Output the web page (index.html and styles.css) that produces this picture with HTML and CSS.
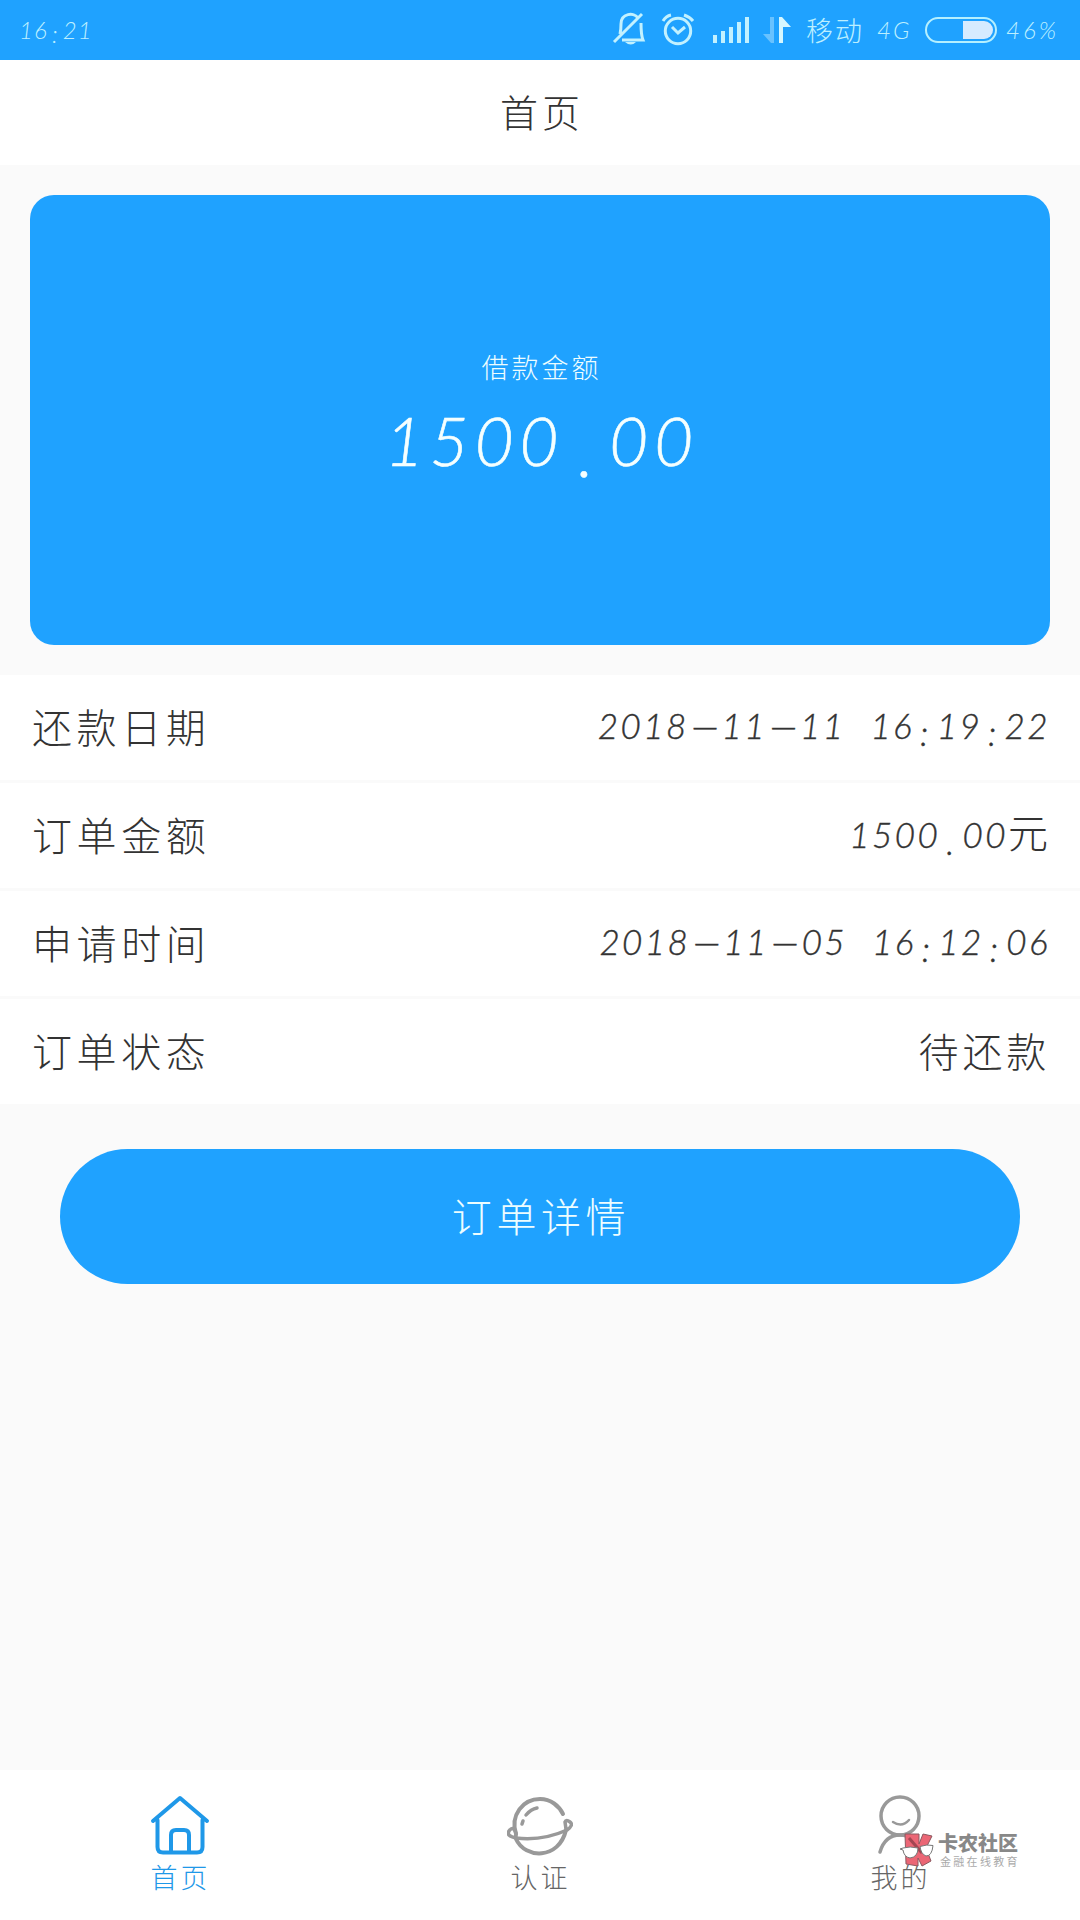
FILE: index.html
```
<!DOCTYPE html>
<html lang="zh-CN">
<head>
    <meta charset="UTF-8">
    <meta name="viewport" content="width=device-width, initial-scale=1.0">
    <title>首页</title>
    <link rel="stylesheet" href="styles.css">
</head>
<body>
    <div class="status-bar">
        <span class="clock">16<i>:</i>21</span>
        <svg class="status-icons" width="196" height="60" viewBox="0 0 196 60" fill="none" stroke="#c2f1ff" stroke-width="3">
            <!-- silent bell -->
            <path d="M10 34C11 30 11 27 11 24C11 13 24 12 28 18M31 23C31 31 31 35 33 40H12M4 42L32 14"/>
            <path d="M15 42h11q-5 5-11 0z" fill="#c2f1ff" stroke="none"/>
            <!-- alarm -->
            <circle cx="68" cy="31" r="12.7"/>
            <path d="M62 27l6 6 7-6M53 21q3-5 8-6M74 15q6 2 9 6"/>
            <!-- signal -->
            <path d="M105 35v8M113 31v12M121 27v16M129 22v21M137 17v26" stroke-width="4"/>
            <!-- data arrows -->
            <path d="M164 17v26h-3l-8-9h7V17z" fill="#68c2ff" stroke="none"/>
            <path d="M169 17h3l9 10h-8v16h-4z" fill="#d5f7ff" stroke="none"/>
        </svg>
        <span class="carrier">移动</span>
        <span class="network">4G</span>
        <span class="battery"><span class="level"></span></span>
        <span class="percent">46%</span>
    </div>

    <header>首页</header>

    <main>
        <div class="card">
            <div class="card-label">借款金额</div>
            <div class="card-amount">1500<i>.</i>00</div>
        </div>

        <ul class="info">
            <li><span>还款日期</span><span class="num">2018<b>—</b>11<b>—</b>11<s></s>16<i>:</i>19<i>:</i>22</span></li>
            <li><span>订单金额</span><span class="num">1500<i>.</i>00<em>元</em></span></li>
            <li><span>申请时间</span><span class="num">2018<b>—</b>11<b>—</b>05<s></s>16<i>:</i>12<i>:</i>06</span></li>
            <li><span>订单状态</span><span class="state">待还款</span></li>
        </ul>

        <button class="detail-btn">订单详情</button>
    </main>

    <nav>
        <a class="tab active">
            <svg width="64" height="64" viewBox="0 0 64 64" fill="none" stroke="#1f98e8" stroke-width="4" stroke-linecap="round" stroke-linejoin="round">
                <path d="M5 28L32 5L59 28M9.500 27V54Q9.500 59.500 15 59.500H49Q54.500 59.500 54.500 54V27M23 59V42Q23 37 28 37H36Q41 37 41 42V59"/>
            </svg>
            <span>首页</span>
        </a>
        <a class="tab">
            <svg width="66" height="64" viewBox="0 0 66 64" fill="none" stroke="#999" stroke-width="4" stroke-linecap="round">
                <path d="M9 41C3 22 16 6 33 6C44 6 52 13 56 21M9 46C18 66 52 67 59 37"/>
                <path d="M9 45Q-1 43 2 38Q6 32 9 40Q9 43 9 45Q36 48 60 37Q67 32 63 29Q59 26 58 29L59 36" stroke-width="3.500"/>
                <path d="M19 22Q24 16 30 15M16 28L15 31" stroke-width="3.500"/>
            </svg>
            <span>认证</span>
        </a>
        <a class="tab">
            <svg width="64" height="64" viewBox="0 0 64 64" fill="none" stroke="#999" stroke-width="3.500" stroke-linecap="round">
                <circle cx="32" cy="23" r="19"/>
                <path d="M25 29Q34 35 41 27" stroke-width="2.500"/>
                <path d="M12 59Q17 42 32 42Q47 42 52 59"/>
            </svg>
            <span>我的</span>
        </a>
    </nav>

    <div class="watermark">
        <svg width="34" height="36" viewBox="0 0 34 36">
            <path d="M5 2H19V12L23 2L32 4L26 16L31 29L22 34L18 26V34L6 32z" fill="#eb6675" stroke="#8b5960"/>
            <path d="M9 6L22 21" stroke="#a34652" stroke-width="3"/>
            <path d="M0 17L3 16Q10 14 18 16Q18 25 10 26Q4 25 3 18zM20 14.500Q27 12 33 13.500Q32 24 26 24Q21 22 20 14.500z" fill="#fff" stroke="#777"/>
        </svg>
        <div>
            <div class="wm-name">卡农社区</div>
            <div class="wm-sub">金融在线教育</div>
        </div>
    </div>
</body>
</html>
```
FILE: styles.css
```
* {
    box-sizing: border-box;
}
body {
    margin: 0;
    height: 1920px;
    display: flex;
    flex-direction: column;
    background: #fafafa;
    color: #333;
    font-family: "Noto Sans CJK SC", sans-serif;
    font-weight: 300;
}

/* status bar */
.status-bar {
    height: 60px;
    display: flex;
    align-items: center;
    background: #1fa2ff;
    color: #bcefff;
    line-height: 58px;
    white-space: nowrap;
}
.clock, .network, .percent, .card-amount, .num {
    font-family: Lato, "Noto Sans CJK SC", sans-serif;
    font-style: italic;
    font-weight: 300;
}
.clock {
    width: 610px;
    padding-left: 19px;
    font-size: 24px;
    letter-spacing: 1px;
}
.clock i {
    display: inline-block;
    width: 15px;
    text-align: center;
    vertical-align: -4px;
    line-height: 1;
}
.status-icons {
    flex: none;
}
.carrier {
    width: 71px;
    font-size: 27px;
    letter-spacing: 2px;
}
.network {
    width: 48px;
    font-size: 24px;
    letter-spacing: 2px;
}
.battery {
    flex: none;
    width: 72px;
    height: 26px;
    padding: 2px;
    border: 2px solid #b5f0ff;
    border-radius: 13px;
    display: flex;
    justify-content: flex-end;
}
.level {
    width: 30px;
    background: #d6ebff;
    border-radius: 0 9px 9px 0;
}
.percent {
    margin-left: 9px;
    font-size: 24px;
    letter-spacing: 3px;
}

header {
    height: 105px;
    background: #fff;
    font-size: 38px;
    line-height: 102px;
    letter-spacing: 4px;
    text-indent: 4px;
    text-align: center;
}

main {
    flex: 1;
    padding-top: 30px;
}
.card {
    height: 450px;
    margin: 0 30px 30px;
    padding-top: 153px;
    border-radius: 24px;
    background: #1fa2ff;
    color: #edfdff;
    text-align: center;
}
.card-label {
    font-size: 27px;
    line-height: 38px;
    letter-spacing: 3px;
    text-indent: 3px;
}
.card-amount {
    font-size: 67px;
    line-height: 80px;
    margin-top: 14px;
    letter-spacing: 6px;
    text-indent: 4px;
    color: #f5ffff;
    -webkit-text-stroke: 0.6px #f5ffff;
}
.card-amount i {
    display: inline-block;
    width: 45px;
    line-height: 1;
    vertical-align: -11px;
}

/* order info */
.info {
    list-style: none;
    margin: 0;
    padding: 0;
}
.info li {
    height: 108px;
    padding: 0 30px 0 32px;
    display: flex;
    justify-content: space-between;
    background: #fff;
    border-bottom: 3px solid #fafafa;
    font-size: 40px;
    line-height: 103px;
    letter-spacing: 4.600px;
}
.info .num {
    font-size: 35px;
    letter-spacing: 2.400px;
    line-height: 101px;
    -webkit-text-stroke: 0.4px #333;
}
.num i {
    display: inline-block;
    width: 22.500px;
    line-height: 1;
    text-align: center;
    vertical-align: -7px;
}
.num b {
    display: inline-block;
    width: 33px;
    line-height: 1;
    font-weight: 300;
    font-style: normal;
    letter-spacing: 0;
    text-align: center;
}
.num s {
    display: inline-block;
    width: 25px;
}
.num em {
    font-size: 40px;
    font-style: normal;
    letter-spacing: 2px;
    -webkit-text-stroke: 0;
}
.info .state {
    letter-spacing: 3.800px;
}

.detail-btn {
    display: block;
    width: 960px;
    height: 135px;
    margin: 42px auto 0;
    padding: 0 0 4px 2px;
    border: none;
    border-radius: 68px;
    background: #1fa2ff;
    color: #edfdff;
    font-family: inherit;
    font-weight: 300;
    font-size: 40px;
    letter-spacing: 4.600px;
}

/* bottom tabs */
nav {
    height: 150px;
    display: flex;
    background: #fff;
}
.tab {
    flex: 1;
    display: flex;
    flex-direction: column;
    align-items: center;
    padding-top: 23px;
    color: #666;
    font-size: 27px;
    line-height: 40px;
    letter-spacing: 3px;
    text-indent: 1px;
}
.tab svg {
    flex: none;
}
.active {
    color: #1f98e8;
}

.watermark {
    position: absolute;
    left: 900px;
    top: 1832px;
    display: flex;
    gap: 4px;
    color: #888;
    white-space: nowrap;
}
.wm-name {
    font-size: 20px;
    font-weight: 900;
    line-height: 22px;
}
.wm-sub {
    font-size: 11px;
    font-weight: 400;
    line-height: 14px;
    letter-spacing: 2.300px;
    padding-left: 2px;
    color: #aaa;
}
```
